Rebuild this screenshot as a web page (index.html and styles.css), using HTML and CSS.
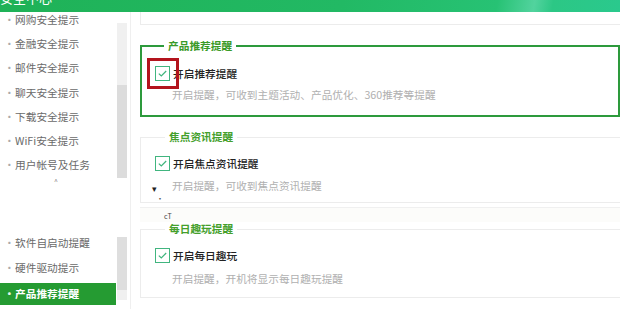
FILE: index.html
```html
<!DOCTYPE html>
<html lang="zh">
<head>
<meta charset="utf-8">
<title>安全中心</title>
<link rel="stylesheet" href="styles.css">
</head>
<body>
<div class="page">
  <header class="topbar"><span class="title">安全中心</span></header>
  <div class="content">
    <aside class="sidebar">
      <div class="list-col">
        <ul class="menu menu-top">
          <li>网购安全提示</li>
          <li>金融安全提示</li>
          <li>邮件安全提示</li>
          <li>聊天安全提示</li>
          <li>下载安全提示</li>
          <li>WiFi安全提示</li>
          <li>用户帐号及任务</li>
        </ul>
        <div class="gap"><span class="caret">^</span></div>
        <ul class="menu menu-bottom">
          <li>软件自启动提醒</li>
          <li>硬件驱动提示</li>
          <li class="active">产品推荐提醒</li>
        </ul>
      </div>
      <div class="scroll-col">
        <div class="track-top"><div class="thumb"></div></div>
        <div class="track-bottom"><div class="thumb2"></div></div>
      </div>
    </aside>
    <main class="main">
      <div class="topbox"></div>

      <fieldset class="group group-active">
        <legend>产品推荐提醒</legend>
        <label class="row"><span class="check"><svg viewBox="0 0 15 15" width="15" height="15"><path d="M3.8 7.6 L6.3 10 L11.2 5" fill="none" stroke="#3fb47c" stroke-width="1.2"/></svg></span><span class="label">开启推荐提醒</span></label>
        <p class="desc">开启提醒，可收到主题活动、产品优化、360推荐等提醒</p>
      </fieldset>

      <fieldset class="group group-2">
        <legend>焦点资讯提醒</legend>
        <label class="row"><span class="check"><svg viewBox="0 0 15 15" width="15" height="15"><path d="M3.8 7.6 L6.3 10 L11.2 5" fill="none" stroke="#3fb47c" stroke-width="1.2"/></svg></span><span class="label">开启焦点资讯提醒</span></label>
        <p class="desc">开启提醒，可收到焦点资讯提醒</p>
      </fieldset>

      <div class="band"></div>

      <fieldset class="group group-3">
        <legend>每日趣玩提醒</legend>
        <label class="row"><span class="check"><svg viewBox="0 0 15 15" width="15" height="15"><path d="M3.8 7.6 L6.3 10 L11.2 5" fill="none" stroke="#3fb47c" stroke-width="1.2"/></svg></span><span class="label">开启每日趣玩</span></label>
        <p class="desc">开启提醒，开机将显示每日趣玩提醒</p>
      </fieldset>

      <span class="mark mark-tri">▾</span>
      <span class="mark mark-dot">·</span>
      <span class="mark mark-ct">cT</span>
    </main>
  </div>
  <div class="highlight"></div>
</div>
</body>
</html>
```

FILE: styles.css
```css
* { box-sizing: border-box; }
html, body { margin: 0; padding: 0; background: #fff; }
body {
  font-family: "Noto Sans CJK SC", "Noto Sans", sans-serif;
  font-size: 10.7px;
  color: #333;
}
.page {
  position: relative;
  width: 620px;
  height: 309px;
  overflow: hidden;
  background: #fff;
}
.topbar {
  height: 12px;
  overflow: hidden;
  background: linear-gradient(100deg, #1fb257 0%, #22b964 55%, #27c274 80%, #52d39e 86%, #2cc785 89%, #2ac98d 100%);
  position: relative;
  z-index: 1;
}
.title {
  display: block;
  margin-top: -10px;
  line-height: 16px;
  font-size: 13px;
  color: #fff;
}
.content {
  display: flex;
  height: 297px;
}
.sidebar {
  width: 130px;
  flex: none;
  display: flex;
}
.list-col {
  width: 117px;
  flex: none;
}
.menu {
  list-style: none;
  margin: 0;
  padding: 0;
}
.menu li {
  height: 24.2px;
  line-height: 24px;
  padding-left: 4px;
  color: #6a6a6a;
  white-space: nowrap;
}
.menu li::before {
  content: "·";
  display: inline-block;
  width: 11px;
  color: #aaa;
}
.menu-top { margin-top: -4px; }
.gap {
  height: 54px;
}
.caret {
  display: block;
  padding-left: 54px;
  font-size: 7px;
  line-height: 8px;
  color: #888;
}
.menu-bottom li.active {
  margin-top: 3px;
  width: 116px;
  height: 22px;
  line-height: 22px;
  background: #259b32;
  color: #fff;
  font-weight: 700;
}
.menu-bottom li.active::before { color: #e8f5e8; }
.scroll-col {
  width: 10px;
  flex: none;
}
.track-top {
  margin-top: 11px;
  height: 155px;
  background: #f0f0f0;
  padding-top: 62px;
}
.thumb {
  height: 93px;
  background: #dcdcdc;
}
.track-bottom {
  margin-top: 59px;
  height: 63px;
  background: #f0f0f0;
}
.thumb2 {
  height: 53px;
  background: #dedede;
}
.main {
  position: relative;
  flex: 1;
  border-left: 1px solid #efefef;
  padding-left: 9px;
  overflow: hidden;
}
.topbox {
  height: 13px;
  border-left: 1px solid #ececec;
  border-bottom: 1px solid #ececec;
}
.group {
  margin: 0;
  min-width: 0;
  border: 1px solid #ececec;
  padding: 12px 0 9px 14px;
}
.group legend {
  margin-left: 10px;
  padding: 0 4px;
  line-height: 14px;
  color: #45a02c;
  font-weight: 700;
}
.group-active {
  margin-top: 14px;
  border: 2px solid #2d9a3c;
  padding: 13px 0 13px 13px;
}
.group-active legend { margin-left: 9px; color: #3a9a28; }
.group-2 {
  margin-top: 13px;
  margin-right: -4px;
}
.group-3 {
  margin-right: -4px;
  padding: 12px 0 11px 14px;
}
.row {
  display: flex;
  align-items: center;
  height: 15px;
}
.check {
  width: 15px;
  height: 15px;
  flex: none;
  border: 1px solid #41b57f;
  background: #fff;
  display: flex;
}
.check svg { display: block; margin: -1px; }
.label {
  margin-left: 3px;
  color: #222;
  font-weight: 500;
  line-height: 15px;
}
.desc {
  margin: 7px 0 0 17px;
  line-height: 14px;
  color: #b0b0b0;
}
.group-2 .desc { margin-top: 8px; }
.group-3 .desc { margin-top: 9px; }
.band {
  margin-top: 4px;
  height: 15px;
  background: #fcfcfa;
  border-top: 1px solid #f0f0f0;
}
.mark {
  position: absolute;
  color: #222;
  line-height: 1;
}
.mark-tri { left: 21px; top: 172px; font-size: 9px; }
.mark-dot { left: 25px; top: 183px; font-size: 8px; color: #555; }
.mark-ct { left: 33px; top: 201px; font-size: 7px; color: #444; }
.highlight {
  position: absolute;
  left: 147px;
  top: 58px;
  width: 32px;
  height: 31px;
  border: 3px solid #b3141d;
}
```
